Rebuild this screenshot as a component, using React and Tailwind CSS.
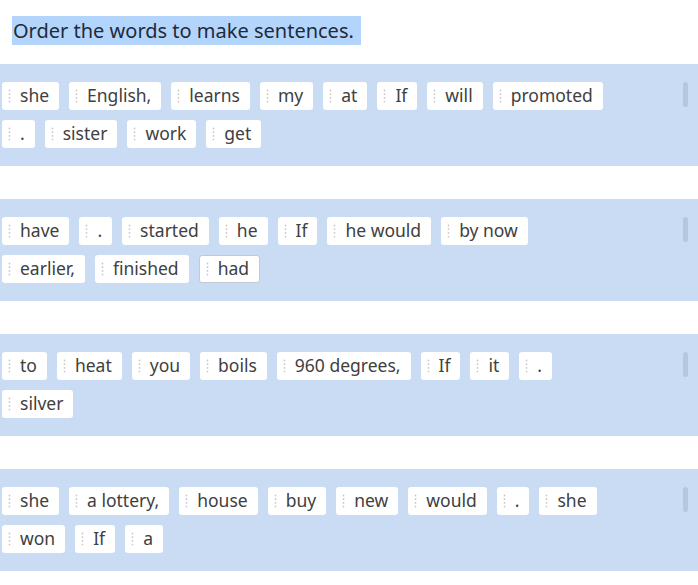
import React from "react";

const groups = [
  {
    rows: [
      ["she", "English,", "learns", "my", "at", "If", "will", "promoted"],
      [".", "sister", "work", "get"],
    ],
  },
  {
    rows: [
      ["have", ".", "started", "he", "If", "he would", "by now"],
      ["earlier,", "finished", "had"],
    ],
    bordered: "had",
  },
  {
    rows: [
      ["to", "heat", "you", "boils", "960 degrees,", "If", "it", "."],
      ["silver"],
    ],
  },
  {
    rows: [
      ["she", "a lottery,", "house", "buy", "new", "would", ".", "she"],
      ["won", "If", "a"],
    ],
  },
];

const Grip = () => (
  <svg width="3" height="14" viewBox="0 0 3 14" className="shrink-0">
    <circle cx="1.5" cy="1.5" r="0.9" fill="#cfc6c6" />
    <circle cx="1.5" cy="5.2" r="0.9" fill="#cfc6c6" />
    <circle cx="1.5" cy="8.9" r="0.9" fill="#cfc6c6" />
    <circle cx="1.5" cy="12.6" r="0.9" fill="#cfc6c6" />
  </svg>
);

const Chip = ({ word, bordered }) => (
  <div
    className={`flex items-center h-[28px] bg-white rounded-[3px] pl-[6px] pr-[10px] ${
      bordered ? "border border-[#c4c9d0]" : ""
    }`}
  >
    <Grip />
    <span className="ml-[9px] -mt-[1px] text-[17.5px] leading-none text-[#404040] whitespace-pre">{word}</span>
  </div>
);

export default function App() {
  return (
    <div className="w-[698px] h-[585px] bg-white overflow-hidden font-['Noto_Sans',sans-serif]">
      <div className="pt-[16px] pl-[12px]">
        <span className="inline-block bg-[#b4d5fb] pl-[1px] pr-[7px] h-[29px] leading-[29px] text-[20px] text-[#1d2b3c]">
          Order the words to make sentences.
        </span>
      </div>
      <div className="mt-[19px] flex flex-col gap-[33px]">
        {groups.map((g, i) => (
          <div key={i} className="relative bg-[#cadcf4] h-[102px] pt-[18px] pl-[2px] flex flex-col gap-[10px]">
            {g.rows.map((row, j) => (
              <div key={j} className="flex gap-[10px]">
                {row.map((w, k) => (
                  <Chip key={k} word={w} bordered={g.bordered === w} />
                ))}
              </div>
            ))}
            <div className="absolute right-[10px] top-[18px] w-[5px] h-[25px] rounded-full bg-[#b5c7df]" />
          </div>
        ))}
      </div>
    </div>
  );
}
